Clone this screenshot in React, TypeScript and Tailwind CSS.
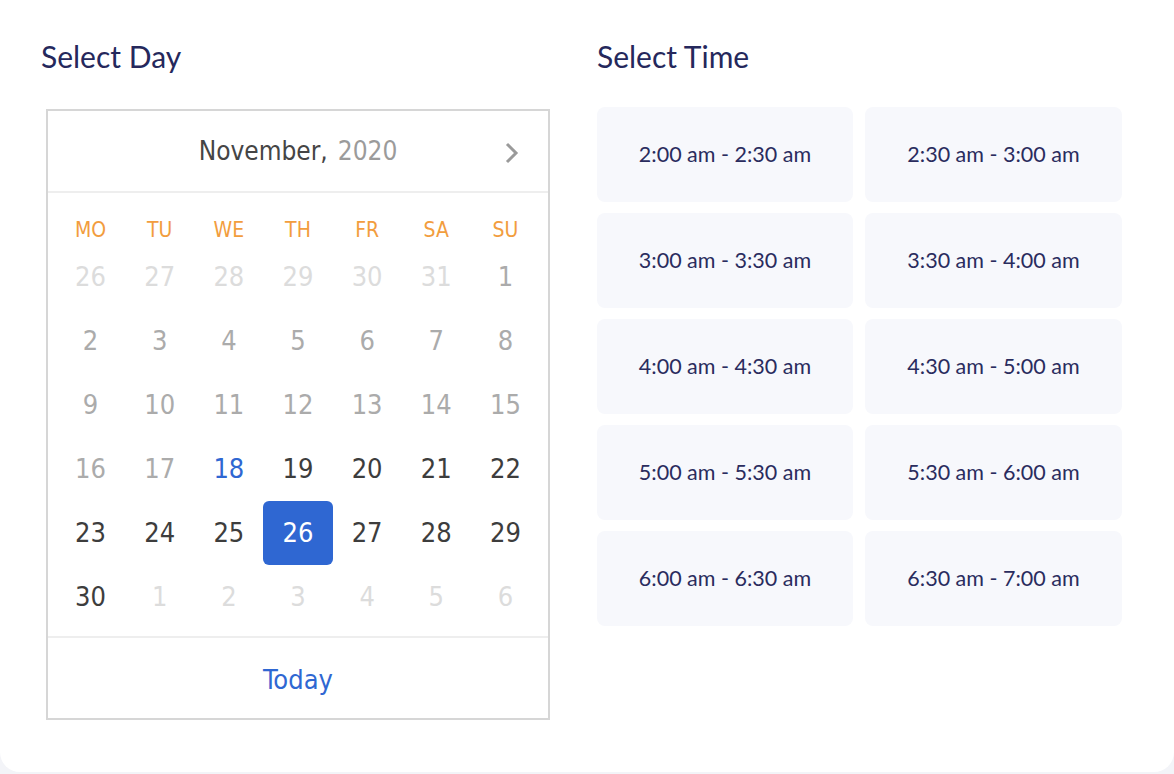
import React from "react";

type Day = { n: number; kind: "out" | "past" | "today" | "future" | "selected" };

const days: Day[] = [
  ...[26, 27, 28, 29, 30, 31].map((n) => ({ n, kind: "out" as const })),
  ...Array.from({ length: 17 }, (_, i) => ({ n: i + 1, kind: "past" as const })),
  { n: 18, kind: "today" },
  ...Array.from({ length: 12 }, (_, i) => ({
    n: i + 19,
    kind: i + 19 === 26 ? ("selected" as const) : ("future" as const),
  })),
  ...[1, 2, 3, 4, 5, 6].map((n) => ({ n, kind: "out" as const })),
];

const weekdays = ["MO", "TU", "WE", "TH", "FR", "SA", "SU"];

const slots = [
  "2:00 am - 2:30 am",
  "2:30 am - 3:00 am",
  "3:00 am - 3:30 am",
  "3:30 am - 4:00 am",
  "4:00 am - 4:30 am",
  "4:30 am - 5:00 am",
  "5:00 am - 5:30 am",
  "5:30 am - 6:00 am",
  "6:00 am - 6:30 am",
  "6:30 am - 7:00 am",
];

const dayClass: Record<Day["kind"], string> = {
  out: "text-[#dcdcdc]",
  past: "text-[#ababab]",
  today: "text-[#2f67d2]",
  future: "text-[#3d3d3d]",
  selected: "bg-[#2f67d2] text-white rounded-[6px]",
};

function Calendar() {
  return (
    <div className="ml-[5px] w-[504px] border-2 border-[#d6d6d6] bg-white font-['DejaVu_Sans_Condensed','DejaVu_Sans',sans-serif] [font-stretch:condensed]">
      {/* month header */}
      <div className="relative flex h-[82px] items-center justify-center border-b-2 border-[#eeeeee] text-[26px]">
        <span className="text-[#454545]">November,</span>
        <span className="ml-[10px] text-[#9b9b9b]">2020</span>
        <svg
          className="absolute right-[29px] top-[30px]"
          width="15"
          height="24"
          viewBox="0 0 15 24"
          fill="none"
        >
          <path d="M3 3l9 9-9 9" stroke="#9a9a9a" strokeWidth="3" />
        </svg>
      </div>

      {/* days */}
      <div className="px-[8px] pt-[22px] pb-[7px]">
        <div className="grid h-[30px] grid-cols-7 items-center text-center text-[21px] text-[#f29d3e]">
          {weekdays.map((w) => (
            <div key={w}>{w}</div>
          ))}
        </div>
        <div className="grid grid-cols-7 text-center text-[27px]">
          {days.map((d, i) => (
            <div
              key={i}
              className={`flex h-[64px] items-center justify-center ${dayClass[d.kind]}`}
            >
              {d.n}
            </div>
          ))}
        </div>
      </div>

      {/* footer */}
      <div className="flex h-[82px] items-center justify-center border-t-2 border-[#eeeeee] pt-[4px] text-[27px] text-[#2f67d2]">
        Today
      </div>
    </div>
  );
}

export default function App() {
  return (
    <div className="min-h-[774px] w-full bg-[#f3f4f8]">
      <div className="flex h-[772px] w-full rounded-b-[20px] bg-white pl-[41px] pt-[37px] font-['Lato',sans-serif]">
        {/* Select Day */}
        <div className="w-[509px]">
          <h2 className="h-[38px] text-[30px] leading-[38px] text-[#25285c]">Select Day</h2>
          <div className="mt-[34px]">
            <Calendar />
          </div>
        </div>

        {/* Select Time */}
        <div className="ml-[47px] w-[525px]">
          <h2 className="h-[38px] text-[30px] leading-[38px] text-[#25285c]">Select Time</h2>
          <div className="mt-[32px] grid grid-cols-[256px_257px] gap-x-[12px] gap-y-[11px]">
            {slots.map((s) => (
              <div
                key={s}
                className="flex h-[95px] items-center justify-center rounded-[8px] bg-[#f7f8fc] text-[21.5px] text-[#2a2c5e]"
              >
                {s}
              </div>
            ))}
          </div>
        </div>
      </div>
    </div>
  );
}
